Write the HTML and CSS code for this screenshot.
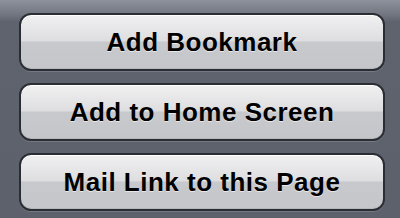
FILE: index.html
```html
<!DOCTYPE html>
<html>
<head>
    <link rel="stylesheet" href="styles.css">
</head>
<body>
    <div class="action-sheet">
        <button class="sheet-button">Add Bookmark</button>
        <button class="sheet-button">Add to Home Screen</button>
        <button class="sheet-button">Mail Link to this Page</button>
    </div>
</body>
</html>
```

FILE: styles.css
```css
body {
    margin: 0;
    padding: 0;
    width: 400px;
    height: 218px;
    overflow: hidden;
    font-family: "Liberation Sans", Arial, sans-serif;
    background-color: #5d616c;
    background-image: linear-gradient(to bottom, #8e929c 0px, #737782 14px, #5f636e 22px, #5d616c 100%);
}

.action-sheet {
    display: flex;
    flex-direction: column;
    gap: 12px;
    padding: 13px 15px 0 19px;
}

.sheet-button {
    box-sizing: border-box;
    height: 58px;
    width: 366px;
    border: 2px solid #2a2d34;
    border-radius: 12px;
    background: linear-gradient(to bottom, #f0f0f1 0%, #dedee0 48%, #c8c9cd 50%, #c5c6ca 100%);
    box-shadow:
        inset 0 1px 0 #ffffff,
        inset 0 -1px 0 #b6b7bb,
        0 1px 0 rgba(255, 255, 255, 0.15);
    color: #000;
    font-family: "Liberation Sans", Arial, sans-serif;
    font-weight: bold;
    font-size: 26px;
    letter-spacing: 0.5px;
    text-shadow: 0 1px 0 rgba(255, 255, 255, 0.6);
    padding: 0;
    cursor: pointer;
}
```
